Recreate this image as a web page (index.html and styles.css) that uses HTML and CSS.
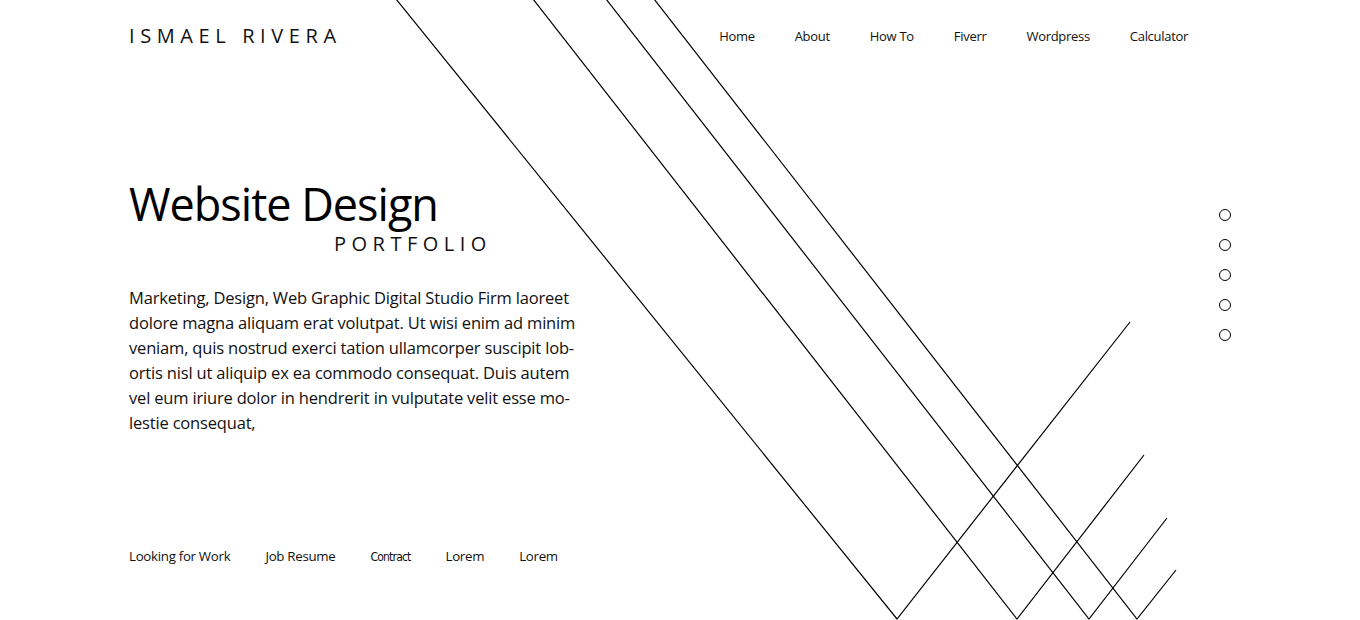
FILE: index.html
```html
<!DOCTYPE html>
<html lang="en">
<head>
<meta charset="utf-8">
<title>Ismael Rivera — Website Design Portfolio</title>
<link rel="stylesheet" href="styles.css">
</head>
<body>
<div class="page">
  <svg class="lines" width="1360" height="620" viewBox="0 0 1360 620" aria-hidden="true">
    <polyline points="396,-1 897,619 1130,322" />
    <polyline points="533,-1 1017,619 1144,455" />
    <polyline points="606,-1 1089,619 1167,518" />
    <polyline points="654,-1 1137,619 1176,570" />
  </svg>

  <header class="header">
    <div class="logo">ISMAEL RIVERA</div>
    <nav class="nav">
      <a href="#">Home</a>
      <a href="#">About</a>
      <a href="#">How To</a>
      <a href="#">Fiverr</a>
      <a href="#">Wordpress</a>
      <a href="#">Calculator</a>
    </nav>
  </header>

  <main class="hero">
    <h1 class="title">Website Design</h1>
    <div class="subtitle">PORTFOLIO</div>
    <p class="intro">Marketing, Design, Web Graphic Digital Studio Firm laoreet<br>dolore magna aliquam erat volutpat. Ut wisi enim ad minim<br>veniam, quis nostrud exerci tation ullamcorper suscipit lob-<br>ortis nisl ut aliquip ex ea commodo consequat. Duis autem<br>vel eum iriure dolor in hendrerit in vulputate velit esse mo-<br>lestie consequat,</p>
    <div class="links">
      <a href="#">Looking for Work</a>
      <a href="#">Job Resume</a>
      <a href="#" class="condensed">Contract</a>
      <a href="#">Lorem</a>
      <a href="#">Lorem</a>
    </div>
  </main>

  <ul class="dots">
    <li></li><li></li><li></li><li></li><li></li>
  </ul>
</div>
</body>
</html>
```

FILE: styles.css
```css
* { box-sizing: border-box; }
html, body { margin: 0; padding: 0; background: #fff; }
body {
  font-family: "Open Sans", "Noto Sans", sans-serif;
  color: #111;
}
a { color: inherit; text-decoration: none; }

.page {
  position: relative;
  width: 1360px;
  height: 620px;
  overflow: hidden;
}

.lines {
  position: absolute;
  left: 0;
  top: 0;
  pointer-events: none;
}
.lines polyline {
  fill: none;
  stroke: #000;
  stroke-width: 1.2;
}

.header {
  position: relative;
  display: flex;
  justify-content: space-between;
  align-items: center;
  height: 71px;
  padding: 0 172px 0 129px;
}
.logo {
  font-size: 20px;
  letter-spacing: 5.6px;
  font-weight: 400;
  color: #111;
}
.nav {
  display: flex;
  gap: 40px;
  font-size: 13px;
  letter-spacing: -0.3px;
}

.hero {
  position: relative;
  padding: 110px 0 0 129px;
}
.title {
  margin: 0;
  font-size: 45px;
  font-weight: 400;
  letter-spacing: -1px;
  line-height: 46px;
  color: #000;
}
.subtitle {
  margin: 6px 0 0 205px;
  font-size: 20px;
  letter-spacing: 5.5px;
  line-height: 22px;
}
.intro {
  margin: 30px 0 0;
  font-size: 16.5px;
  line-height: 25px;
  letter-spacing: -0.18px;
  white-space: nowrap;
}
.links {
  display: flex;
  align-items: baseline;
  gap: 35px;
  margin-top: 112px;
  font-size: 13.3px;
  letter-spacing: -0.3px;
}
.links .condensed {
  font-family: "DejaVu Sans Condensed", "DejaVu Sans", sans-serif;
  font-stretch: condensed;
  font-size: 12px;
  letter-spacing: -0.8px;
}

.dots {
  position: absolute;
  left: 1219px;
  top: 209px;
  margin: 0;
  padding: 0;
  list-style: none;
  display: flex;
  flex-direction: column;
  gap: 18px;
}
.dots li {
  width: 12px;
  height: 12px;
  border: 1.2px solid #000;
  border-radius: 50%;
}
```
